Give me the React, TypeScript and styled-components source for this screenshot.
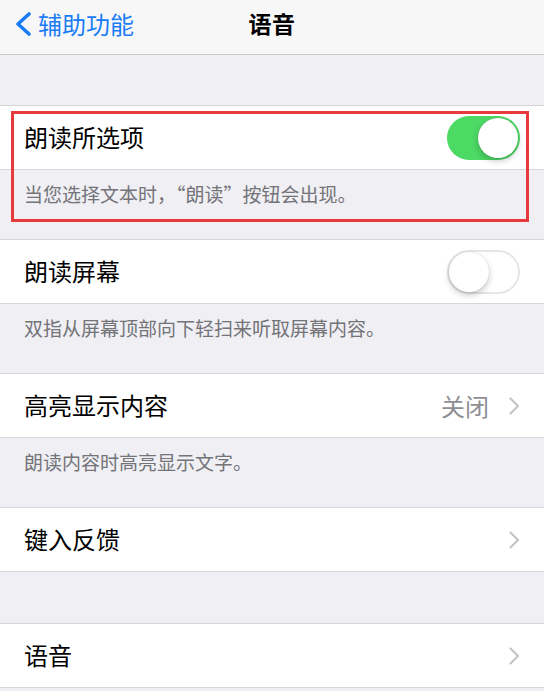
import React from 'react';
import styled, { createGlobalStyle } from 'styled-components';

const GlobalStyle = createGlobalStyle`
  html, body {
    margin: 0;
    padding: 0;
    background: #efeff4;
  }
  body {
    font-family: "Noto Sans CJK SC", "Noto Sans", sans-serif;
    -webkit-font-smoothing: antialiased;
  }
`;

type SwitchProps = {
  on?: boolean
}

const Page = styled.div`
  width: 544px;
  min-height: 691px;
  background: #efeff4;
`;

const NavBar = styled.header`
  display: grid;
  grid-template-columns: 1fr auto 1fr;
  align-items: center;
  height: 55px;
  box-sizing: border-box;
  padding: 0 14px 7px;
  background: #f7f7f8;
  border-bottom: 1px solid #c8c7cc;
`;

const BackButton = styled.div`
  display: flex;
  align-items: center;
  gap: 6px;
  color: #1a7cf5;
  font-size: 24px;
  line-height: 1;
  svg {
    flex-shrink: 0;
  }
`;

const Title = styled.h1`
  margin: 0;
  font-size: 23px;
  font-weight: 700;
  color: #000;
  line-height: 1;
  letter-spacing: 0.5px;
`;

const Gap = styled.div<{ h: number }>`
  height: ${({ h }) => h}px;
`;

const Section = styled.section`
  position: relative;
`;

const Row = styled.div`
  display: flex;
  align-items: center;
  justify-content: space-between;
  height: 63px;
  padding: 0 24px;
  background: #fff;
  border-top: 1px solid #d6d6da;
  border-bottom: 1px solid #d6d6da;
`;

const Label = styled.span`
  font-size: 24px;
  color: #000;
  line-height: 1;
  margin-top: -2px;
`;

const Detail = styled.div`
  display: flex;
  align-items: center;
  gap: 20px;
  color: #8e8e93;
  font-size: 24px;
  line-height: 1;
`;

const Footer = styled.div`
  height: 69px;
  box-sizing: border-box;
  padding: 13px 24px 0;
  font-size: 19px;
  line-height: 22px;
  color: #737378;
`;

const Switch = styled.div<SwitchProps>`
  position: relative;
  width: 73px;
  height: 44px;
  box-sizing: border-box;
  border-radius: 22px;
  background: ${({ on }) => (on ? '#4cd964' : '#fff')};
  border: ${({ on }) => (on ? 'none' : '2px solid #e6e6ea')};
  &::after {
    content: '';
    position: absolute;
    top: ${({ on }) => (on ? '2px' : '0')};
    ${({ on }) => (on ? 'right: 2px;' : 'left: 0;')}
    width: 40px;
    height: 40px;
    border-radius: 50%;
    background: #fff;
    box-shadow: 0 3px 6px rgba(0, 0, 0, 0.22), 0 0 1px rgba(0, 0, 0, 0.16);
  }
`;

const Highlight = styled.div`
  position: absolute;
  top: 6px;
  left: 11px;
  right: 15px;
  bottom: 17px;
  border: 3px solid #e8393c;
  pointer-events: none;
`;

const Chevron = () => (
  <svg width="11" height="18" viewBox="0 0 11 18">
    <path d="M1.5 1.5 L9 9 L1.5 16.5" fill="none" stroke="#c4c4c9" strokeWidth="2.2" strokeLinecap="round" strokeLinejoin="round" />
  </svg>
);

const BackChevron = () => (
  <svg width="18" height="24" viewBox="0 0 18 24">
    <path d="M15 2 L4 12 L15 22" fill="none" stroke="#1a7cf5" strokeWidth="3.6" strokeLinecap="round" strokeLinejoin="round" />
  </svg>
);

const App: React.FC = () => {
  return (
    <Page>
      <GlobalStyle />
      <NavBar>
        <BackButton>
          <BackChevron />
          <span>辅助功能</span>
        </BackButton>
        <Title>语音</Title>
        <div />
      </NavBar>
      <Gap h={50} />

      <Section>
        <Row>
          <Label>朗读所选项</Label>
          <Switch on />
        </Row>
        <Footer>当您选择文本时，“朗读”按钮会出现。</Footer>
        <Highlight />
      </Section>

      <Section>
        <Row>
          <Label>朗读屏幕</Label>
          <Switch />
        </Row>
        <Footer>双指从屏幕顶部向下轻扫来听取屏幕内容。</Footer>
      </Section>

      <Section>
        <Row>
          <Label>高亮显示内容</Label>
          <Detail>
            <span>关闭</span>
            <Chevron />
          </Detail>
        </Row>
        <Footer>朗读内容时高亮显示文字。</Footer>
      </Section>

      <Section>
        <Row>
          <Label>键入反馈</Label>
          <Chevron />
        </Row>
      </Section>
      <Gap h={51} />

      <Section>
        <Row>
          <Label>语音</Label>
          <Chevron />
        </Row>
      </Section>
    </Page>
  )
}

export default App;
